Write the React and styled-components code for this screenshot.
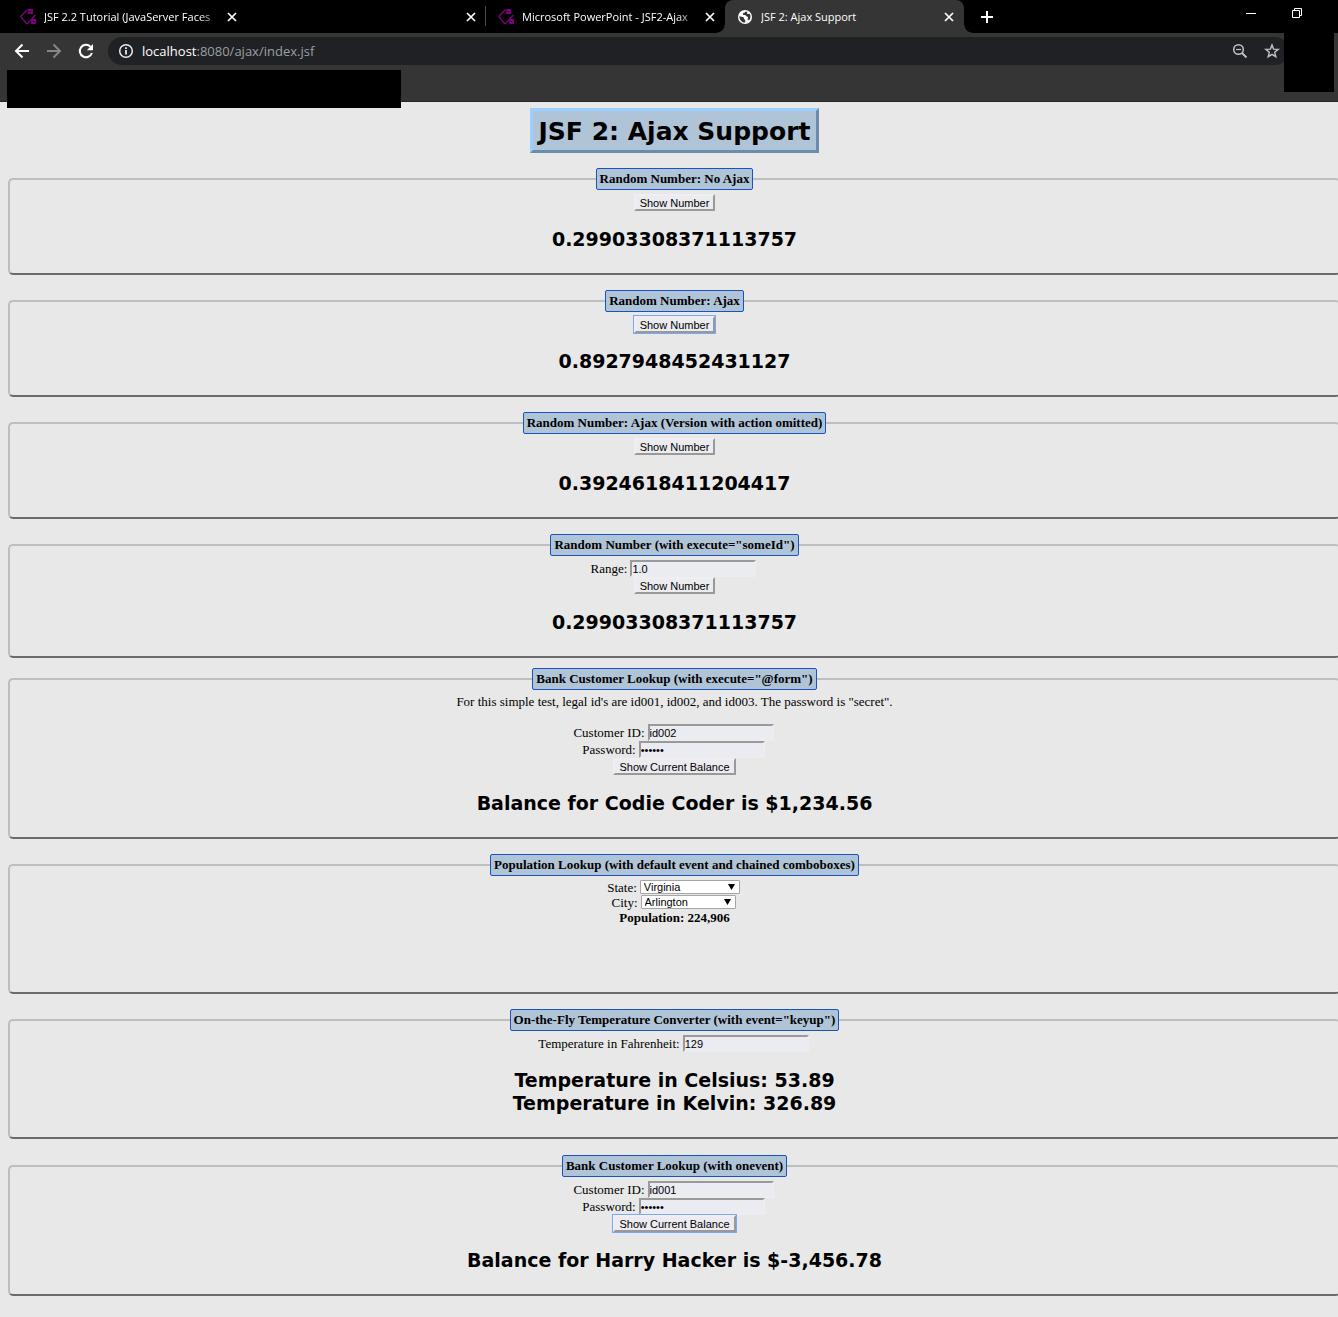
import React from "react";
import styled, { createGlobalStyle, css } from "styled-components";

const GlobalStyle = createGlobalStyle`
  *, *::before, *::after { box-sizing: border-box; }
  body {
    margin: 0;
    background: #e8e8e8;
    color: #000;
    font: 13px/15px "Liberation Serif", "Times New Roman", serif;
    overflow-x: hidden;
  }
`;

/* ---------- browser window ---------- */

const Browser = styled.header`
  position: relative;
  height: 102px;
  background: #353535;
  border-bottom: 1px solid #262626;
  font-family: "Open Sans", "Noto Sans", sans-serif;
`;

const TabStrip = styled.div`
  display: flex;
  height: 33px;
  padding-left: 8px;
  background: #000;
`;

const Tab = styled.div`
  position: relative;
  display: flex;
  align-items: center;
  flex: 0 1 239px;
  min-width: 0;
  gap: 8px;
  padding: 0 8px 0 12px;
  color: #fff;
  ${(p) =>
    p.$divided &&
    css`
      &::after {
        content: "";
        position: absolute;
        right: 0;
        top: 6px;
        width: 1px;
        height: 20px;
        background: #4a4a4a;
      }
    `}
  ${(p) =>
    p.$active &&
    css`
      background: #353535;
      border-radius: 8px 8px 0 0;
      &::before,
      &::after {
        content: "";
        position: absolute;
        bottom: 0;
        width: 8px;
        height: 8px;
      }
      &::before {
        left: -8px;
        background: radial-gradient(circle at 0 0, #000 7px, #353535 8px);
      }
      &::after {
        right: -8px;
        background: radial-gradient(circle at 100% 0, #000 7px, #353535 8px);
      }
    `}
`;

const TabTitle = styled.span`
  flex: 1;
  min-width: 0;
  overflow: hidden;
  white-space: nowrap;
  font-size: 11px;
  line-height: 16px;
  ${(p) =>
    p.$fade &&
    css`
      margin-right: -6px;
      mask-image: linear-gradient(to right, #000 calc(100% - 24px), transparent);
    `}
`;

const ChromeButton = styled.button`
  display: flex;
  align-items: center;
  justify-content: center;
  flex: none;
  width: ${(p) => p.$size || 14}px;
  height: ${(p) => p.$size || 14}px;
  padding: 0;
  border: 0;
  background: none;
  color: ${(p) => p.$color || "#fff"};
  svg { display: block; }
`;

const NewTab = styled.div`
  display: flex;
  align-items: center;
  padding-left: 15px;
`;

const WindowButtons = styled.div`
  display: flex;
  gap: 32px;
  margin: 6px 34px 0 auto;
`;

const Toolbar = styled.div`
  display: flex;
  align-items: center;
  gap: 16px;
  height: 36px;
  padding: 0 49px 0 14px;
`;

const AddressBar = styled.div`
  display: flex;
  align-items: center;
  flex: 1;
  height: 28px;
  margin-left: -2px;
  padding: 0 9px 0 10px;
  gap: 8px;
  border-radius: 14px;
  background: #202124;
`;

const Address = styled.span`
  flex: 1;
  color: #9aa0a6;
  font-size: 13px;
  line-height: 18px;
  b { color: #fff; font-weight: 400; }
`;

const AddressTools = styled.div`
  display: flex;
  gap: 16px;
`;

const BookmarkCover = styled.div`
  position: absolute;
  left: 7px;
  top: 70px;
  width: 394px;
  height: 38px;
  background: #000;
`;

const ProfileCover = styled.div`
  position: absolute;
  right: 4px;
  top: 33px;
  width: 50px;
  height: 59px;
  background: #000;
`;

/* ---------- page ---------- */

const Page = styled.main`
  display: flex;
  flex-direction: column;
  margin: 0 -3px 0 8px;
  padding: 6px 0 21px;
`;

const Title = styled.h1`
  align-self: center;
  margin: 0 0 15px;
  padding: 5px 6px 3px;
  border: 3px solid;
  border-color: #9ad0ff #6a8dad #6a8dad #9ad0ff;
  background: #b0c4d8;
  font: bold 25px/31px "DejaVu Sans", Verdana, sans-serif;
`;

const Panel = styled.fieldset`
  display: block;
  min-width: 0;
  margin: 0 0 ${(p) => p.$gap || 15}px;
  padding: 4px 8px ${(p) => p.$bottom || 22}px;
  border: 2px solid;
  border-color: #bebebe #6b6b6b #6b6b6b #bebebe;
  border-radius: 5px;
`;

const Legend = styled.legend`
  height: 22px;
  margin: 0 auto;
  padding: 0 3px;
  border: 1px solid #1a52c0;
  border-radius: 2px;
  background: #b0c4d8;
  font-weight: bold;
  line-height: 20px;
`;

const Fields = styled.div`
  display: flex;
  flex-direction: column;
  align-items: center;
`;

const Note = styled.p`
  margin: 0 0 15px;
`;

const Row = styled.div`
  display: flex;
  align-items: center;
  gap: 3px;
  padding-right: 2px;
`;

const TextInput = styled.input`
  width: 126px;
  height: 17px;
  padding: 0;
  border: 2px solid;
  border-color: #9a9a9a #ededed #ededed #9a9a9a;
  border-radius: 0;
  background: #ebebf2;
  color: #000;
  font: 11px/13px "Liberation Sans", Arial, sans-serif;
`;

const Button = styled.button`
  height: 17px;
  padding: 2px 4px 0;
  border: 2px solid;
  border-color: #efeff3 #999 #999 #efeff3;
  border-radius: 0;
  background: #ebebf0;
  color: #000;
  font: 11px/11px "Liberation Sans", Arial, sans-serif;
  box-shadow: ${(p) => (p.$focused ? "0 0 0 1px #7ba7f7" : "none")};
`;

const SelectBox = styled.span`
  position: relative;
  display: flex;
  width: ${(p) => p.$width}px;
  svg {
    position: absolute;
    right: 5px;
    top: 4px;
    pointer-events: none;
  }
`;

const Select = styled.select`
  appearance: none;
  width: 100%;
  height: 14px;
  margin-bottom: 1px;
  padding: 0 3px;
  border: 1px solid #a6a6a6;
  border-radius: 1px;
  background: #fff;
  color: #000;
  font: 11px/12px "Liberation Sans", Arial, sans-serif;
`;

const Result = styled.h2`
  margin: 17px 0 0;
  text-align: center;
  font: bold 19px/23px "DejaVu Sans", Verdana, sans-serif;
`;

/* ---------- icons ---------- */

const PageIcon = () => (
  <svg width="16" height="16" viewBox="0 0 16 16" fill="none" stroke="#800080">
    <path d="M7.500 .5 .7 7.500 7 15" strokeWidth="1.200" />
    <path d="M15.500 6 7 15" strokeWidth="1.200" />
    <path d="M9 1h3v3H9zM12 11h3v3h-3z" strokeWidth="1.800" />
  </svg>
);

const GlobeIcon = () => (
  <svg width="16" height="16" viewBox="0 0 16 16">
    <circle cx="8" cy="8" r="7" fill="#fff" />
    <path
      d="M2.3 7.2 5.6 8c1.2.2 1.4.9 1.4 1.7 0 .7 1.2.7 1.2 1.6v2.3C5 13.600 2.400 11 2.300 7.200zM8.500 2.400c-.3 1-.8 1.200-1.600 1.300-.8.1-.6 1-1.100 1.600.2.900 1.400.7 2.300.8.900.2 1 1.300 1.900 1.400 1 .2 1.300 1 .8 1.900l-.5 1.100c.9.2 1.500.4 1.800 1 1.700-2.200 1.900-4.800.5-6.800-.5.4-1.200.5-1.900.3-.9-.3-.7-1.300-.2-2z"
      fill="#353535"
    />
  </svg>
);

const CloseIcon = () => (
  <svg width="10" height="10" viewBox="0 0 10 10" stroke="currentColor" strokeWidth="1.700">
    <path d="m1 1 8 8M9 1 1 9" />
  </svg>
);

const PlusIcon = () => (
  <svg width="12" height="12" viewBox="0 0 12 12" stroke="currentColor" strokeWidth="2">
    <path d="M6 0v12M0 6h12" />
  </svg>
);

const MinimizeIcon = () => (
  <svg width="14" height="14" viewBox="0 0 14 14" stroke="currentColor">
    <path d="M2 7.500h10" />
  </svg>
);

const RestoreIcon = () => (
  <svg width="14" height="14" viewBox="0 0 14 14" fill="none" stroke="currentColor">
    <path d="M2.500 4.500h7v7h-7zM4.500 4.500v-2h7v7h-2" />
  </svg>
);

const BackIcon = () => (
  <svg width="16" height="16" viewBox="0 0 16 16" fill="none" stroke="currentColor" strokeWidth="2">
    <path d="M15 8H2.500M8.500 1.500 2 8l6.500 6.500" />
  </svg>
);

const ForwardIcon = () => (
  <svg width="16" height="16" viewBox="0 0 16 16" fill="none" stroke="currentColor" strokeWidth="2">
    <path d="M1 8h12.500M7.500 1.500 14 8l-6.500 6.500" />
  </svg>
);

const ReloadIcon = () => (
  <svg width="16" height="16" viewBox="0 0 16 16">
    <path d="M13.900 10A6.200 6.200 0 1 1 12.400 3.600" fill="none" stroke="currentColor" strokeWidth="2" />
    <path d="M15 1v6.200H8.800z" fill="currentColor" />
  </svg>
);

const InfoIcon = () => (
  <svg width="16" height="16" viewBox="0 0 16 16">
    <circle cx="8" cy="8" r="6.300" fill="none" stroke="#e8eaed" strokeWidth="1.500" />
    <path d="M7.100 7h1.800v4.500H7.100zM7.100 4.300h1.800v1.700H7.100z" fill="#e8eaed" />
  </svg>
);

const ZoomOutIcon = () => (
  <svg width="16" height="16" viewBox="0 0 16 16" fill="none" stroke="currentColor" strokeWidth="1.500">
    <circle cx="6.500" cy="6.500" r="4.800" />
    <path d="m10 10 4.500 4.500" strokeWidth="1.800" />
    <path d="M4 6.500h5" strokeWidth="1.200" />
  </svg>
);

const StarIcon = () => (
  <svg width="16" height="16" viewBox="0 0 16 16" fill="none" stroke="currentColor" strokeWidth="1.400">
    <path d="m8 2 1.600 4.100 4.600.3-3.500 2.900 1.100 4.400L8 11.300l-3.800 2.400 1.100-4.400-3.500-2.900 4.600-.3z" />
  </svg>
);

const ArrowDown = () => (
  <svg width="7" height="6" viewBox="0 0 7 6">
    <path d="M0 0h7L3.500 6z" />
  </svg>
);

/* ---------- pieces ---------- */

const CloseTab = () => (
  <ChromeButton aria-label="Close tab">
    <CloseIcon />
  </ChromeButton>
);

const Field = ({ id, label, type = "text", value }) => (
  <Row>
    <label htmlFor={id}>{label}</label>
    <TextInput id={id} type={type} defaultValue={value} />
  </Row>
);

const Choice = ({ id, label, width, value }) => (
  <Row>
    <label htmlFor={id}>{label}</label>
    <SelectBox $width={width}>
      <Select id={id} defaultValue={value}>
        <option>{value}</option>
      </Select>
      <ArrowDown />
    </SelectBox>
  </Row>
);

const Section = ({ title, result, children, gap, bottom }) => (
  <Panel $gap={gap} $bottom={bottom}>
    <Legend>{title}</Legend>
    <Fields>{children}</Fields>
    {result && <Result>{result}</Result>}
  </Panel>
);

export default function App() {
  return (
    <>
      <GlobalStyle />
      <Browser>
        <TabStrip>
          <Tab>
            <PageIcon />
            <TabTitle $fade>JSF 2.2 Tutorial (JavaServer Faces</TabTitle>
            <CloseTab />
          </Tab>
          <Tab $divided>
            <TabTitle />
            <CloseTab />
          </Tab>
          <Tab>
            <PageIcon />
            <TabTitle $fade>Microsoft PowerPoint - JSF2-Ajax</TabTitle>
            <CloseTab />
          </Tab>
          <Tab $active>
            <GlobeIcon />
            <TabTitle>JSF 2: Ajax Support</TabTitle>
            <CloseTab />
          </Tab>
          <NewTab>
            <ChromeButton $size={16} aria-label="New tab">
              <PlusIcon />
            </ChromeButton>
          </NewTab>
          <WindowButtons>
            <ChromeButton aria-label="Minimize"><MinimizeIcon /></ChromeButton>
            <ChromeButton aria-label="Restore"><RestoreIcon /></ChromeButton>
          </WindowButtons>
        </TabStrip>
        <Toolbar>
          <ChromeButton $size={16} aria-label="Back"><BackIcon /></ChromeButton>
          <ChromeButton $size={16} $color="#868686" aria-label="Forward"><ForwardIcon /></ChromeButton>
          <ChromeButton $size={16} aria-label="Reload"><ReloadIcon /></ChromeButton>
          <AddressBar>
            <InfoIcon />
            <Address><b>localhost</b>:8080/ajax/index.jsf</Address>
            <AddressTools>
              <ChromeButton $size={16} $color="#c4c5c7" aria-label="Zoom"><ZoomOutIcon /></ChromeButton>
              <ChromeButton $size={16} $color="#c4c5c7" aria-label="Bookmark"><StarIcon /></ChromeButton>
            </AddressTools>
          </AddressBar>
        </Toolbar>
        <BookmarkCover />
        <ProfileCover />
      </Browser>

      <Page>
        <Title>JSF 2: Ajax Support</Title>

        <Section title="Random Number: No Ajax" result="0.29903308371113757">
          <Button>Show Number</Button>
        </Section>

        <Section title="Random Number: Ajax" result="0.8927948452431127">
          <Button $focused>Show Number</Button>
        </Section>

        <Section title="Random Number: Ajax (Version with action omitted)" result="0.3924618411204417">
          <Button>Show Number</Button>
        </Section>

        <Section title={'Random Number (with execute="someId")'} result="0.29903308371113757" gap={10}>
          <Field id="range" label="Range:" value="1.0" />
          <Button>Show Number</Button>
        </Section>

        <Section title={'Bank Customer Lookup (with execute="@form")'} result="Balance for Codie Coder is $1,234.56">
          <Note>For this simple test, legal id's are id001, id002, and id003. The password is "secret".</Note>
          <Field id="customer-a" label="Customer ID:" value="id002" />
          <Field id="password-a" label="Password:" type="password" value="secret" />
          <Button>Show Current Balance</Button>
        </Section>

        <Section title="Population Lookup (with default event and chained comboboxes)" bottom={67}>
          <Choice id="state" label="State:" width={100} value="Virginia" />
          <Choice id="city" label="City:" width={95} value="Arlington" />
          <b>Population: 224,906</b>
        </Section>

        <Section
          title={'On-the-Fly Temperature Converter (with event="keyup")'}
          result={<>Temperature in Celsius: 53.89<br />Temperature in Kelvin: 326.89</>}
          gap={16}
        >
          <Field id="fahrenheit" label="Temperature in Fahrenheit:" value="129" />
        </Section>

        <Section title="Bank Customer Lookup (with onevent)" result="Balance for Harry Hacker is $-3,456.78">
          <Field id="customer-b" label="Customer ID:" value="id001" />
          <Field id="password-b" label="Password:" type="password" value="secret" />
          <Button $focused>Show Current Balance</Button>
        </Section>
      </Page>
    </>
  );
}
